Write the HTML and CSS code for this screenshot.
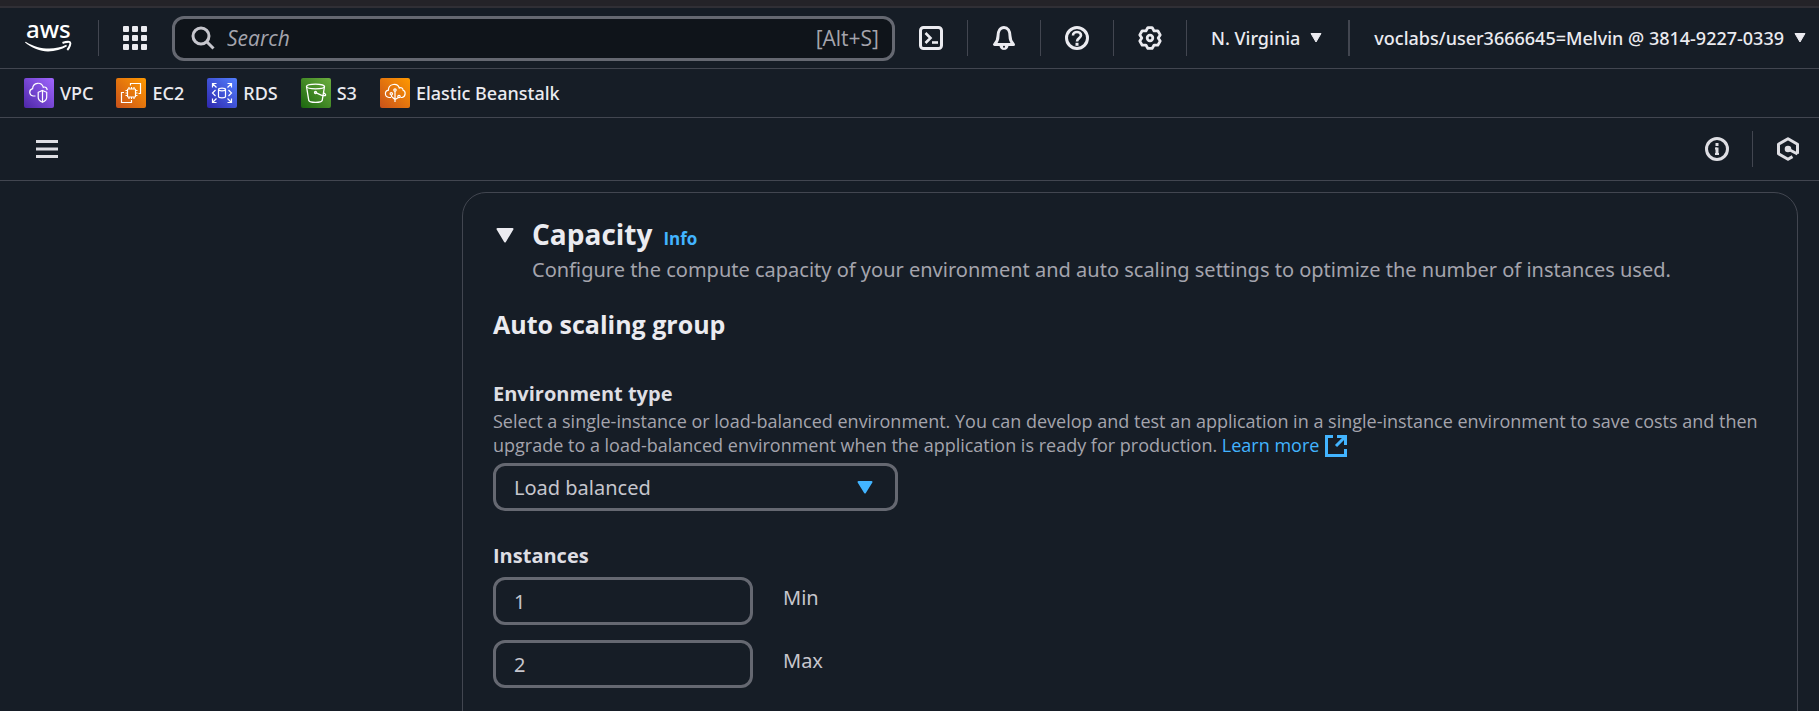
FILE: index.html
```html
<!DOCTYPE html>
<html lang="en">
<head>
<meta charset="utf-8">
<title>Configure environment | Elastic Beanstalk</title>
<link rel="stylesheet" href="styles.css">
</head>
<body>
<div class="window-edge"></div>
<header class="topnav">
  <a class="logo" href="#" aria-label="AWS home">
    <svg width="48" height="60" viewBox="0 0 48 60">
      <text class="logo-text" x="2" y="30">aws</text>
      <path d="M1 34.500C8 40 16 43.500 24 43.500c7 0 13.500-2 19-5.200l-.8-1.600c-5 2.500-11 3.800-17 3.800-8 0-16-2-23.500-6.800z" fill="#fff"/>
      <path d="M38.500 35c3-1.200 6.800-1.500 7.600-.6.900 1-.6 5.300-2.800 7.600" fill="none" stroke="#fff" stroke-width="2"/>
    </svg>
  </a>
  <span class="divider"></span>
  <button class="icon-button apps" aria-label="Services">
    <svg width="24" height="24" viewBox="0 0 24 24" fill="#ebebf0">
      <rect width="6" height="6" rx="1"/><rect x="9" width="6" height="6" rx="1"/><rect x="18" width="6" height="6" rx="1"/>
      <rect y="9" width="6" height="6" rx="1"/><rect x="9" y="9" width="6" height="6" rx="1"/><rect x="18" y="9" width="6" height="6" rx="1"/>
      <rect y="18" width="6" height="6" rx="1"/><rect x="9" y="18" width="6" height="6" rx="1"/><rect x="18" y="18" width="6" height="6" rx="1"/>
    </svg>
  </button>
  <label class="search">
    <svg width="24" height="24" viewBox="0 0 24 24" fill="none" stroke="#c6c6cd" stroke-width="3"><circle cx="10" cy="10" r="8"/><path d="M15.500 15.500l7 7"/></svg>
    <input class="search-input" type="text" placeholder="Search" aria-label="Search">
    <span class="shortcut">[Alt+S]</span>
  </label>
  <div class="tools">
    <button class="icon-button" aria-label="CloudShell">
      <svg width="24" height="24" viewBox="0 0 24 24" fill="none" stroke="#ebebf0" stroke-width="3"><rect x="1.500" y="1.500" width="21" height="21" rx="3"/><path d="M6.500 7l5 5-5 5" stroke-width="2.600"/><path d="M13 16.500h6" stroke-width="2.600"/></svg>
    </button>
    <span class="divider"></span>
    <button class="icon-button" aria-label="Notifications">
      <svg width="24" height="24" viewBox="0 0 24 24" fill="none" stroke="#ebebf0" stroke-width="3" stroke-linejoin="round"><path d="M2.500 18.500h19c-2-2-3.500-4.500-3.500-8.500 0-5-2.300-8.500-6-8.500S6 5 6 10c0 4-1.500 6.500-3.500 8.500z"/><path d="M7.500 19c0 6.600 9 6.600 9 0z" fill="#ebebf0" stroke="none"/><circle cx="12" cy="20.800" r="1" fill="#161d26" stroke="none"/></svg>
    </button>
    <span class="divider"></span>
    <button class="icon-button" aria-label="Help">
      <svg width="24" height="24" viewBox="0 0 24 24" fill="none" stroke="#ebebf0" stroke-width="3"><circle cx="12" cy="12" r="10.500"/><path d="M8 9.500C8 4.800 16 5 16 9.300c0 3-4 2.600-4 6.200" stroke-width="2.600"/><path d="M12 16.800v3"/></svg>
    </button>
    <span class="divider"></span>
    <button class="icon-button" aria-label="Settings">
      <svg width="24" height="24" viewBox="0 0 24 24" fill="none" stroke="#ebebf0" stroke-width="2.800" stroke-linejoin="round"><path d="M9.900 1.600h4.200l2 3.300 3.700-.1L22.200 8.900 20.200 12l2 3.100-2.400 4.100-3.700-.1-2 3.300H9.900l-2-3.300-3.700.1L1.800 15.100l2-3.100-2-3.100 2.400-4.100 3.700.1z"/><circle cx="12" cy="12" r="2.800"/></svg>
    </button>
    <span class="divider"></span>
    <button class="menu-button">N. Virginia <svg width="12" height="10" viewBox="0 0 12 10"><path d="M1 .5h10l-5 8.500z" fill="#ebebf0" stroke="#ebebf0" stroke-linejoin="round"/></svg></button>
    <span class="divider divider-wide"></span>
    <button class="menu-button">voclabs/user3666645=Melvin @ 3814-9227-0339 <svg width="12" height="10" viewBox="0 0 12 10"><path d="M1 .5h10l-5 8.500z" fill="#ebebf0" stroke="#ebebf0" stroke-linejoin="round"/></svg></button>
  </div>
</header>
<nav class="favorites">
  <a class="favorite" href="#">
    <svg width="30" height="30" viewBox="0 0 30 30"><defs><linearGradient id="purple" x1="0" y1="1" x2="1" y2="0"><stop offset="0" stop-color="#4d27a8"/><stop offset="1" stop-color="#a166ff"/></linearGradient></defs><rect width="30" height="30" rx="2" fill="url(#purple)"/><g fill="none" stroke="#fff" stroke-width="1.200"><path d="M11.500 18H9c-4-.6-4.500-6.200-.4-7.300C9 4 17.500 3.500 19.300 9.300c2.200-1 3.700.8 3.900 2.800"/><path d="M18.500 12.500l4.200 1.800v5c0 2.500-2 4-4.200 5-2.300-1-4.300-2.500-4.300-5v-5z"/><path d="M18.500 12.500v11.800"/></g></svg>
    VPC</a>
  <a class="favorite" href="#">
    <svg width="30" height="30" viewBox="0 0 30 30"><defs><linearGradient id="orange" x1="0" y1="1" x2="1" y2="0"><stop offset="0" stop-color="#c8511b"/><stop offset="1" stop-color="#f90"/></linearGradient></defs><rect width="30" height="30" rx="2" fill="url(#orange)"/><g fill="none" stroke="#fff" stroke-width="1.200"><rect x="11.500" y="11" width="8" height="8" rx=".8"/><path d="M13 11V9m2.500 2V9M18 11V9m-5 10v2m2.500-2v2m2.500-2v2m-6.500-8.500h-2m2 2.500h-2m2 2.500h-2m10-5h2m-2 2.500h2m-2 2.500h2"/><path d="M14.500 7.500v-2h10v10h-2M8 14.500H5.500v10h10V22"/></g></svg>
    EC2</a>
  <a class="favorite" href="#">
    <svg width="30" height="30" viewBox="0 0 30 30"><defs><linearGradient id="blue" x1="0" y1="1" x2="1" y2="0"><stop offset="0" stop-color="#2e27ad"/><stop offset="1" stop-color="#527fff"/></linearGradient></defs><rect width="30" height="30" rx="2" fill="url(#blue)"/><g fill="none" stroke="#fff" stroke-width="1.200"><ellipse cx="15" cy="11.500" rx="3.500" ry="1.300"/><path d="M11.500 11.500v7c0 1.800 7 1.800 7 0v-7M5.500 9.500v-4h4m-4 0l4 4m11-4h4v4m0-4l-4 4M5.500 20.500v4h4m-4 0l4-4m11 4h4v-4m0 4l-4-4M8.500 12l-3 3 3 3m13-6l3 3-3 3"/></g></svg>
    RDS</a>
  <a class="favorite" href="#">
    <svg width="30" height="30" viewBox="0 0 30 30"><defs><linearGradient id="green" x1="0" y1="1" x2="1" y2="0"><stop offset="0" stop-color="#1b660f"/><stop offset="1" stop-color="#6cae3e"/></linearGradient></defs><rect width="30" height="30" rx="2" fill="url(#green)"/><g fill="none" stroke="#fff" stroke-width="1.300"><ellipse cx="14.500" cy="8.500" rx="9" ry="2.300"/><path d="M5.500 8.500l2.300 14c1 2.500 12.400 2.500 13.400 0l2.300-14"/><circle cx="14.500" cy="14.500" r="1"/><path d="M15.300 14.800c4 2 8 3.500 9.200 2.600.6-.8-.5-1.800-2-2.700"/></g></svg>
    S3</a>
  <a class="favorite" href="#">
    <svg width="30" height="30" viewBox="0 0 30 30"><rect width="30" height="30" rx="2" fill="url(#orange)"/><g fill="none" stroke="#fff" stroke-width="1.200"><path d="M11 19.500H9c-4.500-.5-4.800-6.300-.6-7.300C8.500 5.500 17.500 4.500 19.300 10c2-1.200 3.700.3 3.800 2.300 3 1 2.700 6.200-1 7.200h-1.600"/><path d="M15 13v11m0-2.500l-3.500-3V17m3.500 4.500l3.500-2"/><circle cx="15" cy="12" r="1.200"/><circle cx="11.300" cy="15.800" r="1.200"/><circle cx="19" cy="18.500" r="1.200"/></g></svg>
    Elastic Beanstalk</a>
</nav>
<div class="toolbar">
  <button class="icon-button" aria-label="Open navigation">
    <svg width="22" height="18" viewBox="0 0 22 18" fill="#dedee3"><path d="M0 0h22v3H0zM0 7.500h22v3H0zM0 15h22v3H0z"/></svg>
  </button>
  <div class="toolbar-end">
    <button class="icon-button" aria-label="Information">
      <svg width="24" height="24" viewBox="0 0 24 24" fill="none" stroke="#dedee3" stroke-width="3"><circle cx="12" cy="12" r="10.500"/><path d="M12 6v3m0 1.500V18"/><path d="M10 11.500h2m-2 5.500h4" stroke-width="2"/></svg>
    </button>
    <span class="divider"></span>
    <button class="icon-button" aria-label="Amazon Q">
      <svg width="24" height="24" viewBox="0 0 24 24" fill="none" stroke="#dedee3" stroke-width="3" stroke-linejoin="round"><path d="M16.500 19.600L12 22.200l-9.500-5.400V7.200L12 1.800l9.500 5.400v9.600"/><path d="M12 12l9.500 5"/><circle cx="12" cy="12" r="1.800" fill="#dedee3"/></svg>
    </button>
  </div>
</div>
<main class="content">
  <section class="panel">
    <div class="panel-header">
      <button class="collapse" aria-label="Collapse Capacity"><svg width="18" height="15" viewBox="0 0 18 15"><path d="M1.500 1h15L9 13.500z" fill="#ebebf0" stroke="#ebebf0" stroke-width="2" stroke-linejoin="round"/></svg></button>
      <div>
        <div class="title-row"><h2 class="title">Capacity</h2><a class="info" href="#">Info</a></div>
        <p class="description">Configure the compute capacity of your environment and auto scaling settings to optimize the number of instances used.</p>
      </div>
    </div>
    <h3 class="subtitle">Auto scaling group</h3>
    <div class="field">
      <label class="field-label" for="env-type">Environment type</label>
      <p class="hint">Select a single-instance or load-balanced environment. You can develop and test an application in a single-instance environment to save costs and then upgrade to a load-balanced environment when the application is ready for production. <a class="link" href="#">Learn more<svg class="external" width="22" height="22" viewBox="0 0 22 22" fill="none" stroke="#42b4ff" stroke-width="3"><path d="M8 1.500H1.500v19h19V14M12 1.500h8.500V10M20.500 1.500L11 11"/></svg></a></p>
      <div class="select">
        <select class="control" id="env-type"><option>Load balanced</option><option>Single instance</option></select>
        <svg class="select-caret" width="16" height="13" viewBox="0 0 16 13"><path d="M1.500 1h13L8 11.500z" fill="#42b4ff" stroke="#42b4ff" stroke-width="2" stroke-linejoin="round"/></svg>
      </div>
    </div>
    <fieldset class="instances">
      <legend class="field-label">Instances</legend>
      <div class="number-row"><input class="control" id="min" type="text" inputmode="numeric" value="1"><label class="unit" for="min">Min</label></div>
      <div class="number-row"><input class="control" id="max" type="text" inputmode="numeric" value="2"><label class="unit" for="max">Max</label></div>
    </fieldset>
  </section>
</main>
</body>
</html>
```
FILE: styles.css
```css
* { box-sizing: border-box; }
body {
  margin: 0;
  height: 100vh;
  overflow: hidden;
  display: flex;
  flex-direction: column;
  background: #161d26;
  color: #c6c6cd;
  font-family: "Noto Sans", "Open Sans", sans-serif;
  font-size: 20px;
}
button, input, select { font: inherit; color: inherit; }
button { background: none; border: 0; padding: 0; cursor: pointer; }
a { color: inherit; text-decoration: none; }
h2, h3, p { margin: 0; }
svg { display: block; flex: none; }

.window-edge { flex: none; height: 8px; background: #242328; border-bottom: 2px solid #302f35; }

.topnav {
  flex: none;
  height: 61px;
  display: flex;
  align-items: center;
  padding: 0 13px 0 24px;
  border-bottom: 1px solid #424650;
}
.logo-text { font-size: 24px; font-weight: 500; fill: #fff; }
.divider { flex: none; width: 1px; height: 36px; background: #424650; }
.divider-wide { width: 2px; }
.topnav > .divider { margin: 0 24px 0 26px; }
.icon-button { display: flex; }
.search {
  flex: 1;
  height: 45px;
  margin: 0 24px 0 25px;
  padding: 0 13px 0 16px;
  display: flex;
  align-items: center;
  gap: 12px;
  background: #0f141a;
  border: 3px solid #656871;
  border-radius: 12px;
  color: #a4a4ad;
  font-family: "Open Sans", "Noto Sans", sans-serif;
  font-size: 21px;
}
.search-input { flex: 1; min-width: 0; background: none; border: 0; padding: 0; outline: 0; }
.search-input::placeholder { color: #a4a4ad; font-style: italic; opacity: 1; }
.tools { display: flex; align-items: center; gap: 24px; }
.menu-button { display: flex; align-items: center; gap: 10px; padding-right: 2px; color: #ebebf0; font-size: 18px; line-height: 24px; font-weight: 500; white-space: nowrap; }
.menu-button:last-child { padding: 0; }

.favorites {
  flex: none;
  height: 49px;
  display: flex;
  align-items: center;
  gap: 23px;
  padding: 0 24px;
  border-bottom: 1px solid #424650;
  color: #ebebf0;
  font-size: 18px;
  line-height: 24px;
  font-weight: 500;
}
.favorite { display: flex; align-items: center; gap: 6px; }

.toolbar {
  flex: none;
  height: 63px;
  display: flex;
  align-items: center;
  justify-content: space-between;
  padding: 0 19px 0 36px;
  border-bottom: 1px solid #424650;
}
.toolbar-end { display: flex; align-items: center; gap: 23px; }

.content { flex: 1; min-height: 0; padding: 11px 21px 0 462px; overflow: hidden; }
.panel { border: 1px solid #424650; border-radius: 24px; padding: 24px 30px 60px; }
.panel-header { display: flex; gap: 18px; padding-left: 3px; }
.collapse { height: 36px; display: flex; align-items: center; }
.title-row { display: flex; align-items: baseline; gap: 11px; }
.title, .info, .subtitle, .field-label, .hint { font-family: "Open Sans", "Noto Sans", sans-serif; }
.title { font-size: 28px; line-height: 34px; font-weight: 700; color: #ebebf0; }
.info { font-size: 17px; line-height: 24px; font-weight: 700; color: #42b4ff; }
.description { line-height: 38px; color: #a4a4ad; }
.subtitle { margin-top: 17px; font-size: 25px; line-height: 36px; font-weight: 700; color: #ebebf0; }
.field { margin-top: 37px; }
.field-label { display: block; padding: 0; line-height: 30px; font-weight: 700; color: #dedee3; }
.hint { font-size: 18px; line-height: 24px; color: #a4a4ad; }
.link { color: #42b4ff; white-space: nowrap; }
.external { display: inline-block; margin-left: 6px; vertical-align: -5px; }
.control {
  width: 100%;
  height: 48px;
  padding: 0 18px;
  background: transparent;
  border: 3px solid #656871;
  border-radius: 12px;
  appearance: none;
}
.select { display: grid; align-items: center; width: 405px; margin-top: 6px; }
.select > * { grid-area: 1 / 1; }
.select-caret { justify-self: end; margin-right: 25px; pointer-events: none; }
.instances { margin: 30px 0 0; padding: 0; border: 0; display: flex; flex-direction: column; gap: 15px; }
.instances .field-label { margin-bottom: 6px; }
.number-row { display: grid; grid-template-columns: 260px 1fr; gap: 30px; }
.unit { line-height: 42px; }
```
